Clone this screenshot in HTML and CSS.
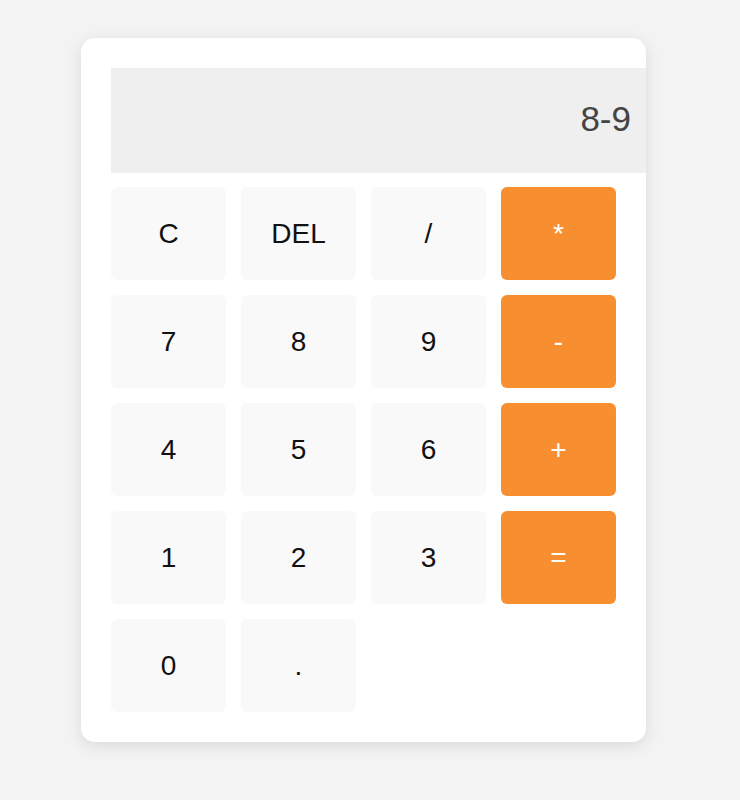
FILE: index.html
```html
<!DOCTYPE html>
<html lang="en">
<head>
<meta charset="utf-8">
<title>Calculator</title>
<link rel="stylesheet" href="styles.css">
</head>
<body>
<div class="calculator">
  <div class="display">8-9</div>
  <div class="keys">
    <button class="key">C</button>
    <button class="key">DEL</button>
    <button class="key">/</button>
    <button class="key op">*</button>
    <button class="key">7</button>
    <button class="key">8</button>
    <button class="key">9</button>
    <button class="key op">-</button>
    <button class="key">4</button>
    <button class="key">5</button>
    <button class="key">6</button>
    <button class="key op">+</button>
    <button class="key">1</button>
    <button class="key">2</button>
    <button class="key">3</button>
    <button class="key op">=</button>
    <button class="key">0</button>
    <button class="key">.</button>
  </div>
</div>
</body>
</html>
```
FILE: styles.css
```css
html, body {
  margin: 0;
  padding: 0;
}
body {
  background: #f3f3f3;
  font-family: "Liberation Sans", Arial, sans-serif;
  padding: 38px 0 0 81px;
  height: 800px;
  box-sizing: border-box;
}
.calculator {
  width: 505px;
  padding: 30px;
  background: #ffffff;
  border-radius: 14px;
  box-shadow: 0 4px 16px rgba(0, 0, 0, 0.1);
}
.display {
  width: 505px;
  height: 75px;
  padding: 30px 15px 0 15px;
  margin-bottom: 14px;
  background: #efefef;
  color: #444;
  font-size: 35px;
  line-height: 41px;
  text-align: right;
}
.keys {
  display: grid;
  grid-template-columns: repeat(4, 115px);
  grid-auto-rows: 93px;
  gap: 15px;
}
.key {
  border: none;
  margin: 0;
  padding: 0;
  background: #f9f9f9;
  border-radius: 6px;
  font-family: "Liberation Sans", Arial, sans-serif;
  font-size: 28px;
  color: #111;
}
.key.op {
  background: #f78f30;
  color: #ffffff;
}
```
